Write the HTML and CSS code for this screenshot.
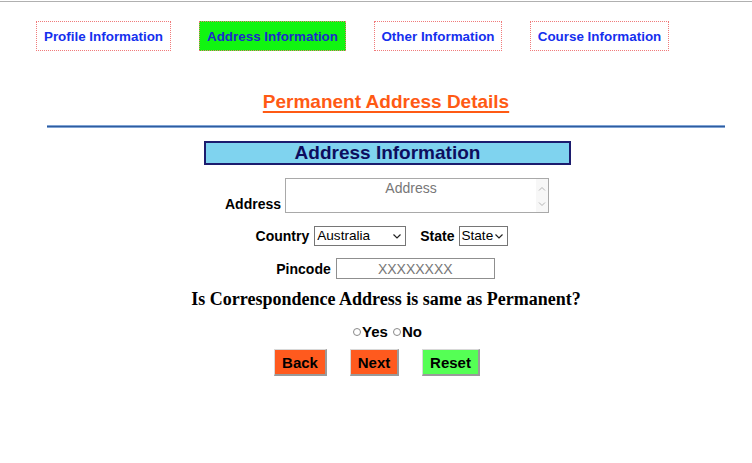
FILE: index.html
```html
<!DOCTYPE html>
<html>
<head>
<meta charset="utf-8">
<link rel="stylesheet" href="styles.css">
</head>
<body>
<div class="topline"></div>
<nav class="tabs">
  <a class="tab">Profile Information</a>
  <a class="tab active">Address Information</a>
  <a class="tab">Other Information</a>
  <a class="tab">Course Information</a>
</nav>
<main class="content">
  <h2 class="title">Permanent Address Details</h2>
  <div class="rule"></div>
  <div class="section-head">Address Information</div>
  <div class="row row-address">
    <label class="lbl">Address</label>
    <span class="addr-wrap">
      <textarea class="addr" placeholder="Address"></textarea>
      <span class="scroll-arrows">
        <svg width="12" height="30" viewBox="0 0 12 30"><path d="M3 9.5 L6 6.5 L9 9.5" fill="none" stroke="#b4b4b4" stroke-width="1"/><path d="M3 21.5 L6 24.5 L9 21.5" fill="none" stroke="#b4b4b4" stroke-width="1"/></svg>
      </span>
    </span>
  </div>
  <div class="row row-country">
    <label class="lbl">Country</label>
    <select class="sel sel-country"><option>Australia</option></select>
    <label class="lbl lbl-state">State</label>
    <select class="sel sel-state"><option>State</option></select>
  </div>
  <div class="row row-pin">
    <label class="lbl">Pincode</label>
    <input class="pin" type="text" placeholder="XXXXXXXX">
  </div>
  <h3 class="question">Is Correspondence Address is same as Permanent?</h3>
  <div class="row row-radio">
    <input type="radio" class="radio" name="same"><span class="lbl">Yes</span>
    <input type="radio" class="radio radio-no" name="same"><span class="lbl">No</span>
  </div>
  <div class="row row-buttons">
    <button class="btn btn-orange">Back</button>
    <button class="btn btn-orange">Next</button>
    <button class="btn btn-green">Reset</button>
  </div>
</main>
</body>
</html>
```
FILE: styles.css
```css
html, body {
  margin: 0;
  padding: 0;
  background: #ffffff;
  font-family: "Liberation Sans", Arial, sans-serif;
}
.topline {
  margin-top: 1px;
  height: 0;
  border-top: 1px solid #b0b0b0;
}
.tabs {
  display: flex;
  gap: 28px;
  margin: 19px 0 0 36px;
}
.tab {
  box-sizing: border-box;
  height: 30px;
  display: flex;
  align-items: center;
  justify-content: center;
  padding: 0;
  white-space: nowrap;
  border: 1px dotted #f07a7a;
  color: #1530ee;
  font-weight: bold;
  font-size: 13.4px;
  text-decoration: none;
}
.tab:nth-child(1) { width: 135px; }
.tab:nth-child(2) { width: 147px; }
.tab:nth-child(3) { width: 128px; }
.tab:nth-child(4) { width: 139px; }
.tab.active {
  background: #11f511;
  color: #1a2acc;
}
.content {
  margin-left: 47px;
  width: 678px;
  display: flex;
  flex-direction: column;
  align-items: center;
}
.title {
  margin: 40px 0 0 0;
  font-size: 19px;
  line-height: 22px;
  font-weight: bold;
  color: #ff5a14;
  text-decoration: underline;
  text-decoration-thickness: 2px;
  text-underline-offset: 3px;
}
.rule {
  align-self: stretch;
  margin-top: 12px;
  height: 1px;
  background: #2f5c9e;
  border-top: 1px solid #7fa3d4;
  border-bottom: 1px solid #7fa3d4;
}
.section-head {
  box-sizing: border-box;
  margin-top: 13px;
  width: 367px;
  height: 24px;
  margin-left: 3px;
  background: #7fd3ef;
  border: 2px solid #1c1c6e;
  color: #0d0d5e;
  font-weight: bold;
  font-size: 19px;
  line-height: 20px;
  text-align: center;
}
.row {
  display: flex;
  align-items: flex-end;
  justify-content: center;
}
.lbl {
  font-weight: bold;
  font-size: 14px;
  color: #000;
}
.row-address {
  margin-top: 13px;
  margin-left: 2px;
}
.row-address .lbl {
  margin-right: 4px;
  line-height: 16px;
  margin-bottom: 1px;
}
.addr-wrap {
  position: relative;
  display: block;
  width: 264px;
  height: 35px;
}
.addr {
  box-sizing: border-box;
  display: block;
  width: 264px;
  height: 35px;
  margin: 0;
  padding: 1px 16px 0 4px;
  border: 1px solid #a9a9a9;
  font-family: "Liberation Sans", Arial, sans-serif;
  font-size: 14px;
  text-align: center;
  resize: none;
  overflow: hidden;
}
.scroll-arrows {
  position: absolute;
  right: 1px;
  top: 1px;
  width: 12px;
  height: 33px;
  background: #f7f7f7;
  display: flex;
  align-items: center;
}
.addr::placeholder, .pin::placeholder {
  color: #777;
}
.row-country {
  margin-top: 13px;
  align-items: center;
  margin-right: 8px;
}
.row-country .lbl { margin-right: 5px; }
.row-country .lbl-state { margin-left: 14px; }
.sel {
  appearance: none;
  -webkit-appearance: none;
  box-sizing: border-box;
  height: 20px;
  margin: 0;
  font-family: "Liberation Sans", Arial, sans-serif;
  font-size: 13.6px;
  line-height: 18px;
  border: 1px solid #767676;
  border-radius: 0;
  color: #000;
  padding: 0 0 0 2px;
  background-color: #fff;
  background-image: url("data:image/svg+xml;utf8,<svg xmlns='http://www.w3.org/2000/svg' width='8' height='5' viewBox='0 0 8 5'><path d='M0.5 0.5 L4 4 L7.5 0.5' fill='none' stroke='%23222' stroke-width='1.2'/></svg>");
  background-repeat: no-repeat;
  background-position: right 4px center;
}
.sel-country { width: 92px; }
.sel-state { width: 49px; padding-left: 1px; }
.row-pin {
  margin-top: 12px;
  align-items: center;
  margin-right: 1px;
}
.row-pin .lbl { margin-right: 5px; }
.pin {
  box-sizing: border-box;
  width: 159px;
  height: 21px;
  margin: 0;
  border: 1px solid #8f8f8f;
  font-family: "Liberation Sans", Arial, sans-serif;
  font-size: 14px;
  text-align: center;
  padding: 0;
}
.question {
  margin: 9px 0 0 0;
  font-family: "Liberation Serif", "Times New Roman", serif;
  font-size: 18px;
  line-height: 22px;
  font-weight: bold;
  color: #000;
}
.row-radio {
  margin-top: 14px;
  align-items: center;
  margin-left: 3px;
}
.radio {
  appearance: none;
  -webkit-appearance: none;
  box-sizing: border-box;
  width: 8px;
  height: 8px;
  margin: 0 1px 0 0;
  border: 1px solid #8a8a8a;
  border-radius: 50%;
  background: #fff;
}
.radio-no { margin-left: 5px; }
.row-radio .lbl { line-height: 16px; font-size: 15px; }
.row-buttons {
  margin-top: 9px;
  gap: 23px;
  margin-right: 18px;
}
.btn {
  box-sizing: border-box;
  height: 27px;
  margin: 0;
  padding: 0;
  font-family: "Liberation Sans", Arial, sans-serif;
  font-weight: bold;
  font-size: 15px;
  color: #000;
  border-style: solid;
  border-width: 1px 2px 2px 1px;
  border-color: #d8d8d8 #9a9a9a #9a9a9a #d8d8d8;
  border-radius: 0;
}
.btn-orange { background: #ff5a1e; }
.btn-green { background: #55ff55; }
.btn:nth-child(1) { width: 53px; }
.btn:nth-child(2) { width: 49px; }
.btn:nth-child(3) { width: 58px; }
```
